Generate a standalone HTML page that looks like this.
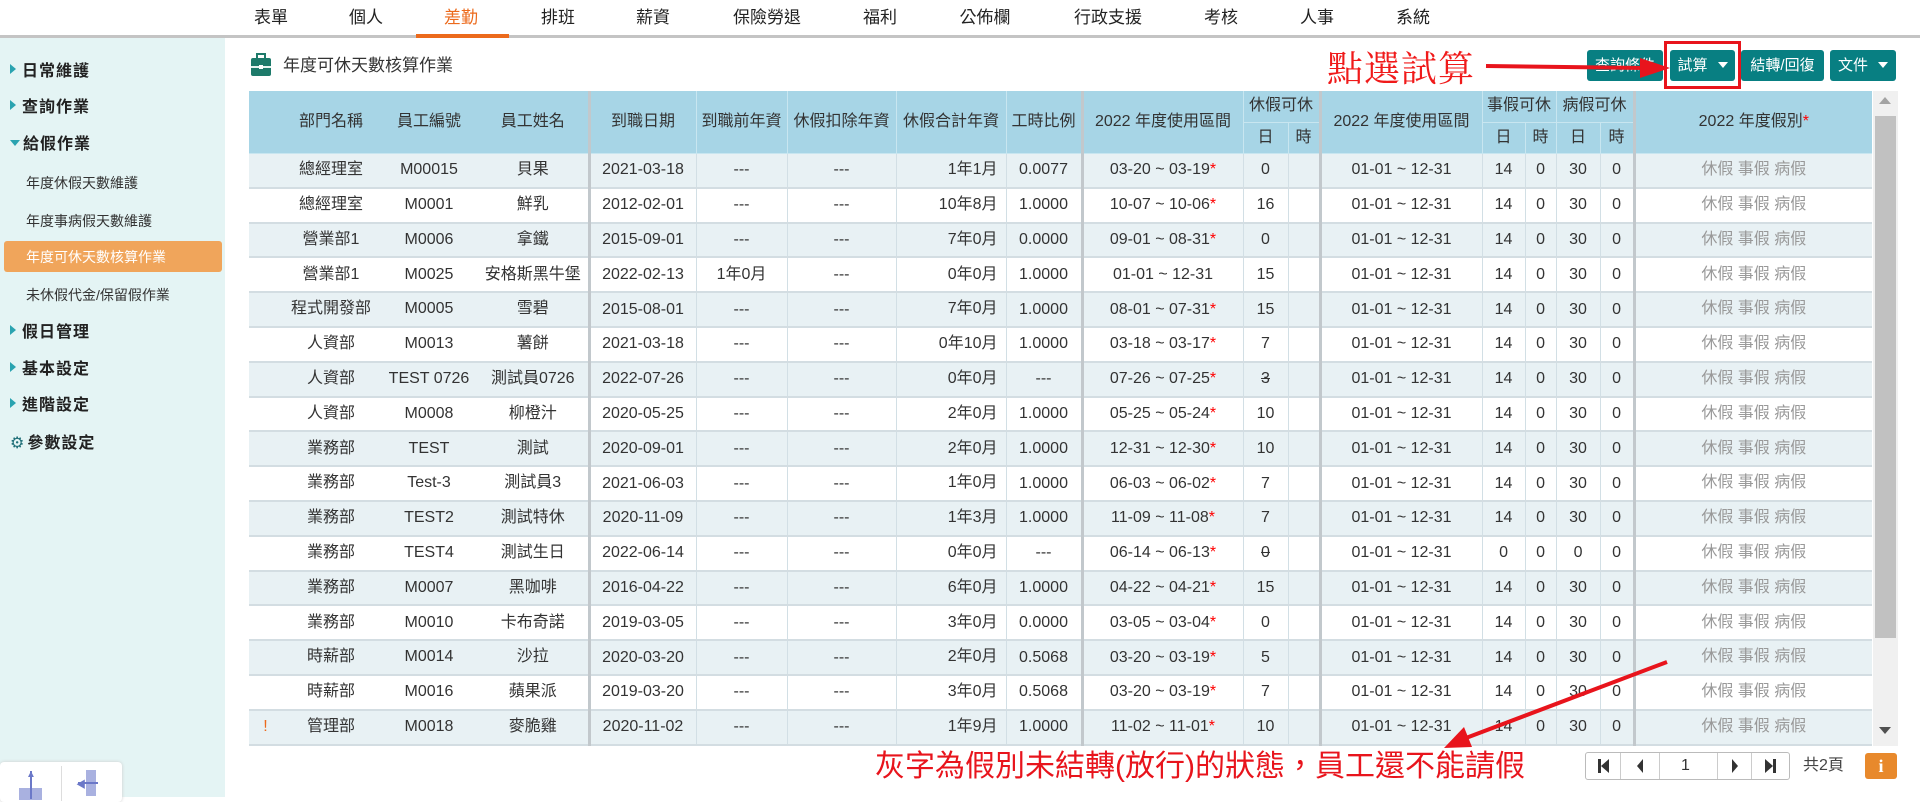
<!DOCTYPE html>
<html><head><meta charset="utf-8">
<style>
*{box-sizing:border-box;margin:0;padding:0}
body{width:1920px;height:797px;overflow:hidden;background:#fff;font-family:"Liberation Sans","Noto Sans CJK TC",sans-serif;color:#333;position:relative}
.abs{position:absolute}
.nav{position:absolute;top:0;left:0;width:1920px;height:36px;background:#fff}
.navline{position:absolute;top:35px;left:0;width:1920px;height:3px;background:#c4c4c4}
.nav span{position:absolute;top:8px;font-size:17px;line-height:20px;color:#222;transform:translateX(-50%);white-space:nowrap}
.side{position:absolute;top:38px;left:0;width:225px;height:759px;background:#e4f4f4}
.side .m{position:absolute;left:10px;font-size:16px;line-height:20px;color:#222;font-weight:bold;letter-spacing:1px}
.side .s{position:absolute;left:26px;font-size:14px;line-height:18px;color:#333}
.tri{display:inline-block;width:0;height:0;border-top:5px solid transparent;border-bottom:5px solid transparent;border-left:6px solid #2aa3b0;margin-right:6px;vertical-align:2px}
.trid{display:inline-block;width:0;height:0;border-left:5px solid transparent;border-right:5px solid transparent;border-top:6px solid #2aa3b0;margin-right:3px;vertical-align:3px}
table{position:absolute;left:249px;top:91px;width:1623px;border-collapse:collapse;table-layout:fixed;font-size:16px}
th{background:#a7d5e6;font-weight:normal;color:#333;border-left:1px solid #c8e6f0;border-bottom:1px solid #c8e6f0;height:31px;white-space:nowrap;line-height:18px;vertical-align:middle}
td{height:34.8px;text-align:center;border-left:1px solid #d2dfe5;border-bottom:2px solid #d3dde2;white-space:nowrap;color:#333;line-height:18px;vertical-align:middle;padding:0}
td span.c{display:inline-block;vertical-align:middle;line-height:18px}
tbody tr:nth-child(odd) td{background:#e8f1f4}
.nb{border-left:none}
.tk{border-right:3px solid #c2c8cc}
.r{text-align:right;padding-right:8px}
.g{color:#999}
.st{color:red}
.btn{position:absolute;top:50px;height:31px;background:#087f82;color:#fff;font-size:15px;border-radius:3px;text-align:center;line-height:31px}
.dd{display:inline-block;border-left:5px solid transparent;border-right:5px solid transparent;border-top:6px solid #fff;margin-left:10px;vertical-align:2px}
</style></head><body>
<div class="nav">
<span style="left:271px">表單</span><span style="left:366px">個人</span><span style="left:461px;color:#ec6a1c">差勤</span><span style="left:558px">排班</span><span style="left:653px">薪資</span><span style="left:767px">保險勞退</span><span style="left:880px">福利</span><span style="left:985px">公佈欄</span><span style="left:1108px">行政支援</span><span style="left:1221px">考核</span><span style="left:1317px">人事</span><span style="left:1413px">系統</span>
</div>
<div class="navline"></div>
<div class="abs" style="left:416px;top:34px;width:93px;height:4px;background:#ec6a1c"></div>

<div class="side">
<div class="m" style="top:24px"><span class="tri"></span>日常維護</div>
<div class="m" style="top:60px"><span class="tri"></span>查詢作業</div>
<div class="m" style="top:97px"><span class="trid"></span>給假作業</div>
<div class="s" style="top:136px">年度休假天數維護</div>
<div class="s" style="top:174px">年度事病假天數維護</div>
<div class="abs" style="left:4px;top:203px;width:218px;height:31px;background:#f0a55b;border-radius:3px"></div>
<div class="s" style="top:210px;color:#fff">年度可休天數核算作業</div>
<div class="s" style="top:248px">未休假代金/保留假作業</div>
<div class="m" style="top:285px"><span class="tri"></span>假日管理</div>
<div class="m" style="top:322px"><span class="tri"></span>基本設定</div>
<div class="m" style="top:358px"><span class="tri"></span>進階設定</div>
<div class="m" style="top:395px"><span style="color:#1f6f78;margin-right:2px;font-family:'DejaVu Sans'">⚙</span>參數設定</div>
<div class="abs" style="left:0;top:724px;width:122px;height:40px;background:#fff;border-radius:4px;box-shadow:0 0 3px #ccc"></div>
<div class="abs" style="left:61px;top:728px;width:1px;height:35px;background:#ddd"></div>
<div class="abs" style="left:19px;top:750px;width:23px;height:12px;background:#a9b1e0"></div>
<div class="abs" style="left:30px;top:733px;width:2px;height:28px;background:#6b78c8"></div>
<div class="abs" style="left:26px;top:731px;color:#6b78c8;font-size:10px">▲</div>
<div class="abs" style="left:86px;top:732px;width:10px;height:26px;background:#a9b1e0"></div>
<div class="abs" style="left:78px;top:744px;width:20px;height:2px;background:#6b78c8"></div>
<div class="abs" style="left:76px;top:738px;color:#6b78c8;font-size:10px">◀</div>
</div>

<svg class="abs" style="left:251px;top:53px" width="20" height="24" viewBox="0 0 20 24"><rect x="6" y="1" width="8" height="5" fill="none" stroke="#1d7a6a" stroke-width="2"/><rect x="0" y="5" width="20" height="18" rx="2" fill="#1d7a6a"/><rect x="0" y="13" width="20" height="2" fill="#e8f4f0"/><rect x="8" y="12" width="4" height="4" fill="#fff"/></svg>
<div class="abs" style="left:283px;top:56px;font-size:17px;line-height:20px;color:#333">年度可休天數核算作業</div>

<div class="btn" style="left:1587px;width:76px">查詢條件</div>
<div class="btn" style="left:1670px;width:65px">試算<span class="dd"></span></div>
<div class="btn" style="left:1741px;width:83px">結轉/回復</div>
<div class="btn" style="left:1830px;width:66px">文件<span class="dd"></span></div>
<div class="abs" style="left:1664px;top:41px;width:77px;height:48px;border:3px solid #e8141c"></div>
<div class="abs" style="left:1327px;top:41px;font-size:36px;color:#f01a1a;font-family:'Liberation Serif','Noto Serif CJK SC',serif;letter-spacing:1px">點選試算</div>
<svg class="abs" style="left:1480px;top:55px" width="200" height="24"><line x1="6" y1="11" x2="165" y2="13" stroke="#e8141c" stroke-width="4"/><polygon points="160,3 190,13 160,23" fill="#e8141c"/></svg>

<table>
<colgroup><col style="width:33px"><col style="width:98px"><col style="width:98px"><col style="width:111px"><col style="width:107px"><col style="width:91px"><col style="width:109px"><col style="width:110px"><col style="width:76px"><col style="width:161px"><col style="width:45px"><col style="width:32px"><col style="width:162px"><col style="width:43px"><col style="width:31px"><col style="width:44px"><col style="width:34px"><col style="width:238px"></colgroup>
<thead>
<tr><th rowspan="2" class="nb"></th><th rowspan="2" class="nb">部門名稱</th><th rowspan="2" class="nb">員工編號</th><th rowspan="2" class="nb tk">員工姓名</th><th rowspan="2">到職日期</th><th rowspan="2">到職前年資</th><th rowspan="2">休假扣除年資</th><th rowspan="2">休假合計年資</th><th rowspan="2" class="tk">工時比例</th><th rowspan="2">2022 年度使用區間</th><th colspan="2" class="tk">休假可休</th><th rowspan="2">2022 年度使用區間</th><th colspan="2">事假可休</th><th colspan="2" class="tk">病假可休</th><th rowspan="2">2022 年度假別<span class="st">*</span></th></tr>
<tr><th>日</th><th class="tk">時</th><th>日</th><th>時</th><th>日</th><th class="tk">時</th></tr>
</thead>
<tbody>
<tr><td class="nb"></td><td class="nb"><span class="c">總經理室</span></td><td class="nb"><span class="c">M00015</span></td><td class="nb tk"><span class="c">貝果</span></td><td>2021-03-18</td><td>---</td><td>---</td><td class="r"><span class="c">1年1月</span></td><td class="tk">0.0077</td><td>03-20 ~ 03-19<span class="st">*</span></td><td>0</td><td class="tk"></td><td>01-01 ~ 12-31</td><td>14</td><td>0</td><td>30</td><td class="tk">0</td><td class="g"><span class="c">休假 事假 病假</span></td></tr>
<tr><td class="nb"></td><td class="nb"><span class="c">總經理室</span></td><td class="nb"><span class="c">M0001</span></td><td class="nb tk"><span class="c">鮮乳</span></td><td>2012-02-01</td><td>---</td><td>---</td><td class="r"><span class="c">10年8月</span></td><td class="tk">1.0000</td><td>10-07 ~ 10-06<span class="st">*</span></td><td>16</td><td class="tk"></td><td>01-01 ~ 12-31</td><td>14</td><td>0</td><td>30</td><td class="tk">0</td><td class="g"><span class="c">休假 事假 病假</span></td></tr>
<tr><td class="nb"></td><td class="nb"><span class="c">營業部1</span></td><td class="nb"><span class="c">M0006</span></td><td class="nb tk"><span class="c">拿鐵</span></td><td>2015-09-01</td><td>---</td><td>---</td><td class="r"><span class="c">7年0月</span></td><td class="tk">0.0000</td><td>09-01 ~ 08-31<span class="st">*</span></td><td>0</td><td class="tk"></td><td>01-01 ~ 12-31</td><td>14</td><td>0</td><td>30</td><td class="tk">0</td><td class="g"><span class="c">休假 事假 病假</span></td></tr>
<tr><td class="nb"></td><td class="nb"><span class="c">營業部1</span></td><td class="nb"><span class="c">M0025</span></td><td class="nb tk"><span class="c">安格斯黑牛堡</span></td><td>2022-02-13</td><td><span class="c">1年0月</span></td><td>---</td><td class="r"><span class="c">0年0月</span></td><td class="tk">1.0000</td><td>01-01 ~ 12-31</td><td>15</td><td class="tk"></td><td>01-01 ~ 12-31</td><td>14</td><td>0</td><td>30</td><td class="tk">0</td><td class="g"><span class="c">休假 事假 病假</span></td></tr>
<tr><td class="nb"></td><td class="nb"><span class="c">程式開發部</span></td><td class="nb"><span class="c">M0005</span></td><td class="nb tk"><span class="c">雪碧</span></td><td>2015-08-01</td><td>---</td><td>---</td><td class="r"><span class="c">7年0月</span></td><td class="tk">1.0000</td><td>08-01 ~ 07-31<span class="st">*</span></td><td>15</td><td class="tk"></td><td>01-01 ~ 12-31</td><td>14</td><td>0</td><td>30</td><td class="tk">0</td><td class="g"><span class="c">休假 事假 病假</span></td></tr>
<tr><td class="nb"></td><td class="nb"><span class="c">人資部</span></td><td class="nb"><span class="c">M0013</span></td><td class="nb tk"><span class="c">薯餅</span></td><td>2021-03-18</td><td>---</td><td>---</td><td class="r"><span class="c">0年10月</span></td><td class="tk">1.0000</td><td>03-18 ~ 03-17<span class="st">*</span></td><td>7</td><td class="tk"></td><td>01-01 ~ 12-31</td><td>14</td><td>0</td><td>30</td><td class="tk">0</td><td class="g"><span class="c">休假 事假 病假</span></td></tr>
<tr><td class="nb"></td><td class="nb"><span class="c">人資部</span></td><td class="nb"><span class="c">TEST 0726</span></td><td class="nb tk"><span class="c">測試員0726</span></td><td>2022-07-26</td><td>---</td><td>---</td><td class="r"><span class="c">0年0月</span></td><td class="tk">---</td><td>07-26 ~ 07-25<span class="st">*</span></td><td><s>3</s></td><td class="tk"></td><td>01-01 ~ 12-31</td><td>14</td><td>0</td><td>30</td><td class="tk">0</td><td class="g"><span class="c">休假 事假 病假</span></td></tr>
<tr><td class="nb"></td><td class="nb"><span class="c">人資部</span></td><td class="nb"><span class="c">M0008</span></td><td class="nb tk"><span class="c">柳橙汁</span></td><td>2020-05-25</td><td>---</td><td>---</td><td class="r"><span class="c">2年0月</span></td><td class="tk">1.0000</td><td>05-25 ~ 05-24<span class="st">*</span></td><td>10</td><td class="tk"></td><td>01-01 ~ 12-31</td><td>14</td><td>0</td><td>30</td><td class="tk">0</td><td class="g"><span class="c">休假 事假 病假</span></td></tr>
<tr><td class="nb"></td><td class="nb"><span class="c">業務部</span></td><td class="nb"><span class="c">TEST</span></td><td class="nb tk"><span class="c">測試</span></td><td>2020-09-01</td><td>---</td><td>---</td><td class="r"><span class="c">2年0月</span></td><td class="tk">1.0000</td><td>12-31 ~ 12-30<span class="st">*</span></td><td>10</td><td class="tk"></td><td>01-01 ~ 12-31</td><td>14</td><td>0</td><td>30</td><td class="tk">0</td><td class="g"><span class="c">休假 事假 病假</span></td></tr>
<tr><td class="nb"></td><td class="nb"><span class="c">業務部</span></td><td class="nb"><span class="c">Test-3</span></td><td class="nb tk"><span class="c">測試員3</span></td><td>2021-06-03</td><td>---</td><td>---</td><td class="r"><span class="c">1年0月</span></td><td class="tk">1.0000</td><td>06-03 ~ 06-02<span class="st">*</span></td><td>7</td><td class="tk"></td><td>01-01 ~ 12-31</td><td>14</td><td>0</td><td>30</td><td class="tk">0</td><td class="g"><span class="c">休假 事假 病假</span></td></tr>
<tr><td class="nb"></td><td class="nb"><span class="c">業務部</span></td><td class="nb"><span class="c">TEST2</span></td><td class="nb tk"><span class="c">測試特休</span></td><td>2020-11-09</td><td>---</td><td>---</td><td class="r"><span class="c">1年3月</span></td><td class="tk">1.0000</td><td>11-09 ~ 11-08<span class="st">*</span></td><td>7</td><td class="tk"></td><td>01-01 ~ 12-31</td><td>14</td><td>0</td><td>30</td><td class="tk">0</td><td class="g"><span class="c">休假 事假 病假</span></td></tr>
<tr><td class="nb"></td><td class="nb"><span class="c">業務部</span></td><td class="nb"><span class="c">TEST4</span></td><td class="nb tk"><span class="c">測試生日</span></td><td>2022-06-14</td><td>---</td><td>---</td><td class="r"><span class="c">0年0月</span></td><td class="tk">---</td><td>06-14 ~ 06-13<span class="st">*</span></td><td><s>0</s></td><td class="tk"></td><td>01-01 ~ 12-31</td><td>0</td><td>0</td><td>0</td><td class="tk">0</td><td class="g"><span class="c">休假 事假 病假</span></td></tr>
<tr><td class="nb"></td><td class="nb"><span class="c">業務部</span></td><td class="nb"><span class="c">M0007</span></td><td class="nb tk"><span class="c">黑咖啡</span></td><td>2016-04-22</td><td>---</td><td>---</td><td class="r"><span class="c">6年0月</span></td><td class="tk">1.0000</td><td>04-22 ~ 04-21<span class="st">*</span></td><td>15</td><td class="tk"></td><td>01-01 ~ 12-31</td><td>14</td><td>0</td><td>30</td><td class="tk">0</td><td class="g"><span class="c">休假 事假 病假</span></td></tr>
<tr><td class="nb"></td><td class="nb"><span class="c">業務部</span></td><td class="nb"><span class="c">M0010</span></td><td class="nb tk"><span class="c">卡布奇諾</span></td><td>2019-03-05</td><td>---</td><td>---</td><td class="r"><span class="c">3年0月</span></td><td class="tk">0.0000</td><td>03-05 ~ 03-04<span class="st">*</span></td><td>0</td><td class="tk"></td><td>01-01 ~ 12-31</td><td>14</td><td>0</td><td>30</td><td class="tk">0</td><td class="g"><span class="c">休假 事假 病假</span></td></tr>
<tr><td class="nb"></td><td class="nb"><span class="c">時薪部</span></td><td class="nb"><span class="c">M0014</span></td><td class="nb tk"><span class="c">沙拉</span></td><td>2020-03-20</td><td>---</td><td>---</td><td class="r"><span class="c">2年0月</span></td><td class="tk">0.5068</td><td>03-20 ~ 03-19<span class="st">*</span></td><td>5</td><td class="tk"></td><td>01-01 ~ 12-31</td><td>14</td><td>0</td><td>30</td><td class="tk">0</td><td class="g"><span class="c">休假 事假 病假</span></td></tr>
<tr><td class="nb"></td><td class="nb"><span class="c">時薪部</span></td><td class="nb"><span class="c">M0016</span></td><td class="nb tk"><span class="c">蘋果派</span></td><td>2019-03-20</td><td>---</td><td>---</td><td class="r"><span class="c">3年0月</span></td><td class="tk">0.5068</td><td>03-20 ~ 03-19<span class="st">*</span></td><td>7</td><td class="tk"></td><td>01-01 ~ 12-31</td><td>14</td><td>0</td><td>30</td><td class="tk">0</td><td class="g"><span class="c">休假 事假 病假</span></td></tr>
<tr><td class="nb" style="color:#ec6a1c">!</td><td class="nb"><span class="c">管理部</span></td><td class="nb"><span class="c">M0018</span></td><td class="nb tk"><span class="c">麥脆雞</span></td><td>2020-11-02</td><td>---</td><td>---</td><td class="r"><span class="c">1年9月</span></td><td class="tk">1.0000</td><td>11-02 ~ 11-01<span class="st">*</span></td><td>10</td><td class="tk"></td><td>01-01 ~ 12-31</td><td>14</td><td>0</td><td>30</td><td class="tk">0</td><td class="g"><span class="c">休假 事假 病假</span></td></tr>
</tbody>
</table>

<div class="abs" style="left:1873px;top:91px;width:25px;height:655px;background:#f0f0f0"></div>
<div class="abs" style="left:1875px;top:116px;width:21px;height:522px;background:#c1c1c1"></div>
<div class="abs" style="left:1879px;top:97px;width:0;height:0;border-left:6px solid transparent;border-right:6px solid transparent;border-bottom:7px solid #a3a3a3"></div>
<div class="abs" style="left:1879px;top:727px;width:0;height:0;border-left:6px solid transparent;border-right:6px solid transparent;border-top:7px solid #505050"></div>

<svg class="abs" style="left:1430px;top:655px" width="250" height="105"><line x1="237" y1="7" x2="28" y2="86" stroke="#e8141c" stroke-width="4"/><polygon points="14,93 34,72 42,92" fill="#e8141c"/></svg>
<div class="abs" style="left:875px;top:749px;font-size:30px;line-height:36px;color:#e8141c;white-space:nowrap">灰字為假別未結轉(放行)的狀態，員工還不能請假</div>

<div class="abs" style="left:1585px;top:752px;width:205px;height:28px;border:1px solid #bbb;border-radius:3px;background:#fff"></div>
<div class="abs" style="left:1620px;top:753px;width:1px;height:26px;background:#ccc"></div>
<div class="abs" style="left:1659px;top:753px;width:1px;height:26px;background:#ccc"></div>
<div class="abs" style="left:1717px;top:753px;width:1px;height:26px;background:#ccc"></div>
<div class="abs" style="left:1751px;top:753px;width:1px;height:26px;background:#ccc"></div>
<div class="abs" style="left:1598px;top:759px;width:3px;height:14px;background:#333"></div>
<div class="abs" style="left:1601px;top:759px;border-top:7px solid transparent;border-bottom:7px solid transparent;border-right:8px solid #333"></div>
<div class="abs" style="left:1637px;top:759px;border-top:7px solid transparent;border-bottom:7px solid transparent;border-right:6px solid #333"></div>
<div class="abs" style="left:1681px;top:757px;font-size:16px;color:#333">1</div>
<div class="abs" style="left:1732px;top:759px;border-top:7px solid transparent;border-bottom:7px solid transparent;border-left:6px solid #333"></div>
<div class="abs" style="left:1765px;top:759px;border-top:7px solid transparent;border-bottom:7px solid transparent;border-left:8px solid #333"></div>
<div class="abs" style="left:1773px;top:759px;width:3px;height:14px;background:#333"></div>
<div class="abs" style="left:1803px;top:756px;font-size:16px;line-height:20px;color:#444">共2頁</div>
<div class="abs" style="left:1865px;top:753px;width:32px;height:26px;background:#e8892c;border-radius:3px;color:#fff;font-weight:bold;font-size:18px;text-align:center;line-height:26px;font-family:'Liberation Serif',serif">i</div>
</body></html>
